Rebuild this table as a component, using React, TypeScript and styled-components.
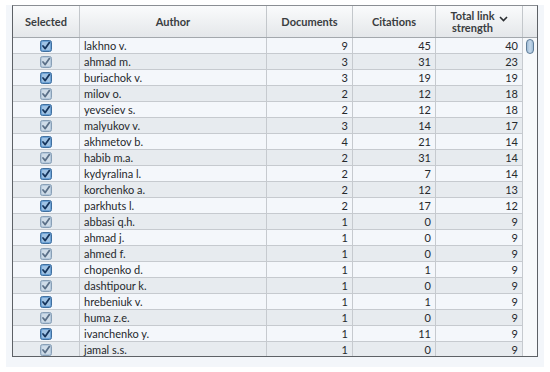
import styled, { createGlobalStyle } from 'styled-components';

const GlobalStyle = createGlobalStyle`
  html, body {
    margin: 0;
    padding: 0;
    background: #ffffff;
  }
`;

type Author = {
  name: string;
  documents: number;
  citations: number;
  strength: number;
};

const authors: Author[] = [
  { name: 'lakhno v.', documents: 9, citations: 45, strength: 40 },
  { name: 'ahmad m.', documents: 3, citations: 31, strength: 23 },
  { name: 'buriachok v.', documents: 3, citations: 19, strength: 19 },
  { name: 'milov o.', documents: 2, citations: 12, strength: 18 },
  { name: 'yevseiev s.', documents: 2, citations: 12, strength: 18 },
  { name: 'malyukov v.', documents: 3, citations: 14, strength: 17 },
  { name: 'akhmetov b.', documents: 4, citations: 21, strength: 14 },
  { name: 'habib m.a.', documents: 2, citations: 31, strength: 14 },
  { name: 'kydyralina l.', documents: 2, citations: 7, strength: 14 },
  { name: 'korchenko a.', documents: 2, citations: 12, strength: 13 },
  { name: 'parkhuts l.', documents: 2, citations: 17, strength: 12 },
  { name: 'abbasi q.h.', documents: 1, citations: 0, strength: 9 },
  { name: 'ahmad j.', documents: 1, citations: 0, strength: 9 },
  { name: 'ahmed f.', documents: 1, citations: 0, strength: 9 },
  { name: 'chopenko d.', documents: 1, citations: 1, strength: 9 },
  { name: 'dashtipour k.', documents: 1, citations: 0, strength: 9 },
  { name: 'hrebeniuk v.', documents: 1, citations: 1, strength: 9 },
  { name: 'huma z.e.', documents: 1, citations: 0, strength: 9 },
  { name: 'ivanchenko y.', documents: 1, citations: 11, strength: 9 },
  { name: 'jamal s.s.', documents: 1, citations: 0, strength: 9 },
];

const COLUMNS = '67px 187px 86px 83px 87px';

const Page = styled.div`
  width: 550px;
  height: 372px;
  box-sizing: border-box;
  padding: 5px 0 0 6px;
  font-family: Lato, 'Open Sans', sans-serif;
  -webkit-font-smoothing: antialiased;
`;

const Panel = styled.div`
  height: 362px;
  width: 538px;
  box-sizing: border-box;
  padding: 0 0 0 6px;
  background: #f3f6fa;
`;

const Frame = styled.div`
  display: flex;
  width: 526px;
  height: 352px;
  box-sizing: border-box;
  border: 1px solid #5d6166;
  border-top-color: #8a8e93;
  background: #f7f9fb;
  overflow: hidden;
`;

const TableArea = styled.div`
  display: flex;
  flex-direction: column;
  width: 510px;
`;

const HeaderRow = styled.div`
  display: grid;
  grid-template-columns: ${COLUMNS};
  height: 32px;
  flex-shrink: 0;
  background: linear-gradient(#fafbfc, #e4e7ea);
  border-bottom: 1px solid #a3a8ad;
  box-sizing: border-box;
`;

const HeaderCell = styled.div`
  display: flex;
  align-items: center;
  justify-content: center;
  gap: 4px;
  border-right: 1px solid #c3c7cb;
  font-size: 11px;
  font-weight: 700;
  line-height: 12px;
  color: #3a3d41;
  text-align: center;
`;

const Chevron = styled.svg`
  width: 9px;
  height: 6px;
  margin-top: -6px;
`;

const Body = styled.div`
  flex: 1;
  overflow: hidden;
`;

const Row = styled.div<{ $odd: boolean }>`
  display: grid;
  grid-template-columns: ${COLUMNS};
  height: 16px;
  box-sizing: border-box;
  border-bottom: 1px solid #c6cacf;
  background: ${(p) => (p.$odd ? '#e7ebef' : '#f4f7fb')};
`;

const Cell = styled.div<{ $align?: 'left' | 'right' | 'center' }>`
  display: flex;
  align-items: center;
  justify-content: ${(p) =>
    p.$align === 'right' ? 'flex-end' : p.$align === 'center' ? 'center' : 'flex-start'};
  padding: 0 4px;
  border-right: 1px solid #c6cacf;
  font-size: 11px;
  line-height: 15px;
  color: #26292d;
  overflow: hidden;
  white-space: nowrap;
`;

const ScrollGutter = styled.div`
  display: flex;
  flex-direction: column;
  width: 14px;
`;

const GutterHead = styled.div`
  height: 32px;
  flex-shrink: 0;
  box-sizing: border-box;
  background: linear-gradient(#fafbfc, #e4e7ea);
  border-bottom: 1px solid #a3a8ad;
`;

const Thumb = styled.div`
  width: 8px;
  height: 15px;
  margin: 1px 0 0 3px;
  border-radius: 4px;
  border: 1px solid #5f7c98;
  box-sizing: border-box;
  background: linear-gradient(90deg, #9fbcd6, #c5d8ea 50%, #9fbcd6);
`;

function CheckBox({ strong }: { strong: boolean }) {
  const fill = strong ? '#6ea3d6' : '#b5c9dc';
  const edge = strong ? '#3f6f9f' : '#889fb6';
  const tick = strong ? '#17365d' : '#5b7088';
  return (
    <svg width="12" height="12" viewBox="0 0 12 12">
      <rect x="0.5" y="0.5" width="11" height="11" rx="2" fill={fill} stroke={edge} />
      <rect x="2" y="2" width="8" height="8" rx="1" fill="#ffffff" opacity="0.35" />
      <path d="M3 6 L5.2 8.6 L9.4 2.6" fill="none" stroke={tick} strokeWidth="1.8" strokeLinecap="round" strokeLinejoin="round" />
    </svg>
  );
}

export default function App() {
  return (
    <Page>
      <GlobalStyle />
      <Panel>
        <Frame>
          <TableArea>
            <HeaderRow>
              <HeaderCell>Selected</HeaderCell>
              <HeaderCell>Author</HeaderCell>
              <HeaderCell>Documents</HeaderCell>
              <HeaderCell>Citations</HeaderCell>
              <HeaderCell>
                <span>
                  Total link
                  <br />
                  strength
                </span>
                <Chevron viewBox="0 0 9 6">
                  <path d="M1 1 L4.5 4.5 L8 1" fill="none" stroke="#2b2e32" strokeWidth="1.6" />
                </Chevron>
              </HeaderCell>
            </HeaderRow>
            <Body>
              {authors.map((a, i) => (
                <Row key={a.name} $odd={i % 2 === 1}>
                  <Cell $align="center">
                    <CheckBox strong={i % 2 === 0} />
                  </Cell>
                  <Cell>{a.name}</Cell>
                  <Cell $align="right">{a.documents}</Cell>
                  <Cell $align="right">{a.citations}</Cell>
                  <Cell $align="right">{a.strength}</Cell>
                </Row>
              ))}
            </Body>
          </TableArea>
          <ScrollGutter>
            <GutterHead />
            <Thumb />
          </ScrollGutter>
        </Frame>
      </Panel>
    </Page>
  );
}
